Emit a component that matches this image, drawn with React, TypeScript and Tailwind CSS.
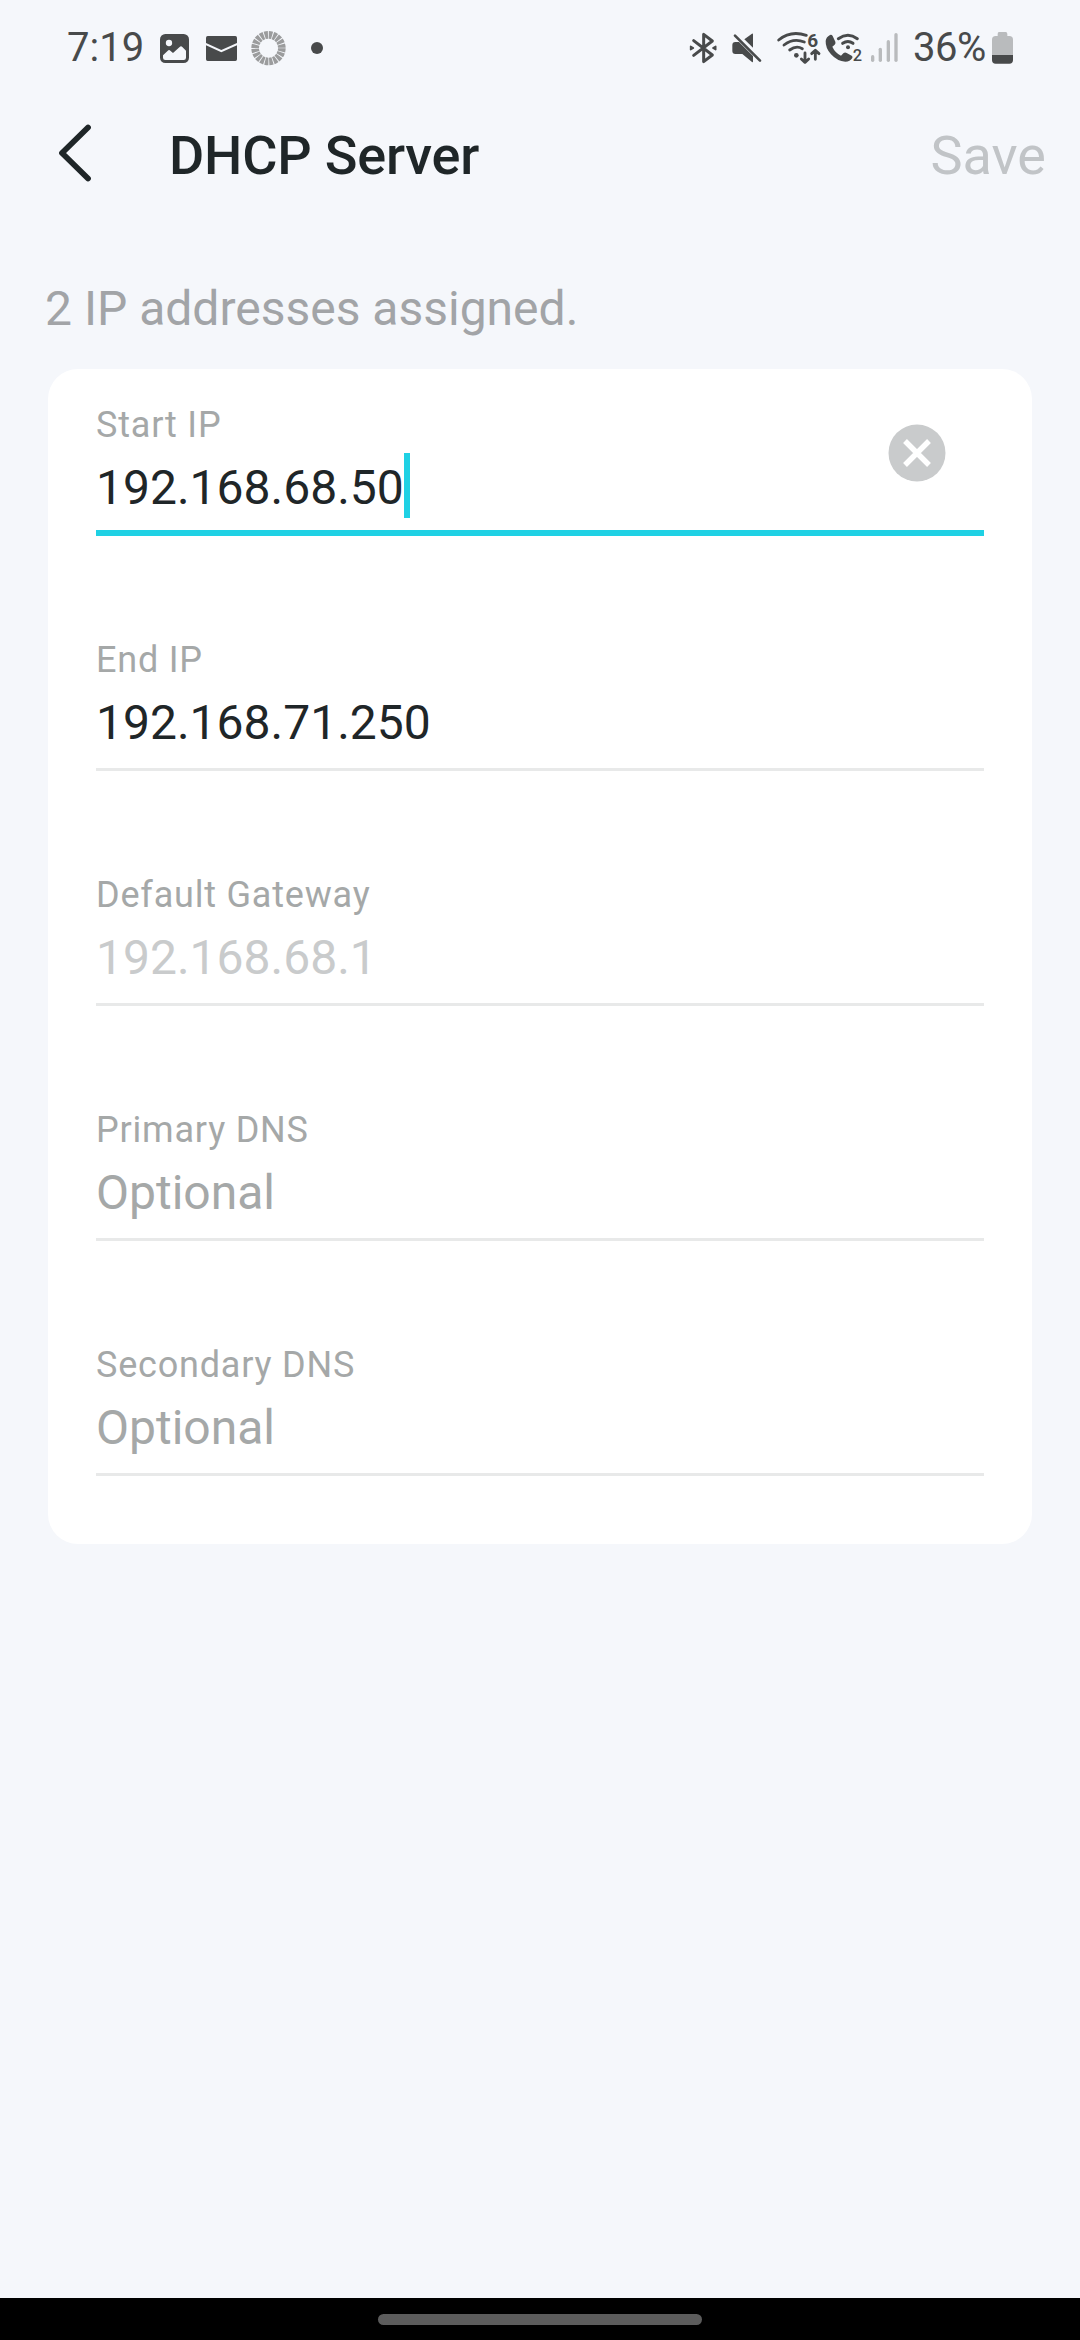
import React from "react";

type FieldProps = {
  label: string;
  value: string;
  valueClass: string;
  active?: boolean;
};

const INK = "#484a4b";

function ImageIcon() {
  return (
    <svg className="ml-[19px] h-10 w-[29px] shrink-0" viewBox="330 24 87 120">
      <rect x="330" y="42" width="87" height="87" rx="16" fill={INK} />
      <circle cx="357" cy="69" r="9.5" fill="#f5f7fb" />
      <path d="M339 106 L355 91 Q358 89 361 92 L369 99 L389 81 Q393 77 397 81 L408 92 V113 Q408 120 401 120 H346 Q339 120 339 113 Z" fill="#f5f7fb" />
    </svg>
  );
}

function MailIcon() {
  return (
    <svg className="ml-[17px] h-10 w-[31px] shrink-0" viewBox="468 24 93 120">
      <path d="M473 48 H556 Q561 48 561 53 V69 L514 90 L468 69 V53 Q468 48 473 48 Z" fill={INK} />
      <path d="M468 76 L514 97 L561 76 V118 Q561 123 556 123 H473 Q468 123 468 118 Z" fill={INK} />
    </svg>
  );
}

function RingIcon() {
  return (
    <svg className="ml-[14px] h-10 w-[35px] shrink-0" viewBox="603 24 105 120">
      <circle
        cx="655.5"
        cy="84.5"
        r="40"
        fill="none"
        stroke="#9b9c9d"
        strokeWidth="23"
        pathLength={200}
        strokeDasharray="8 2"
      />
    </svg>
  );
}

function BluetoothIcon() {
  return (
    <svg className="h-10 w-7 shrink-0" viewBox="57 24 84 120">
      <path
        d="M71 62 L127 105 L101 125 V43 L127 63 L71 106"
        fill="none"
        stroke={INK}
        strokeWidth="9"
        strokeLinejoin="round"
        strokeLinecap="round"
      />
      <path d="M62 79 L70 84 L62 89 Z M137 79 L129 84 L137 89 Z" fill={INK} stroke={INK} strokeWidth="5" strokeLinejoin="round" />
    </svg>
  );
}

function MuteIcon() {
  return (
    <svg className="ml-[15px] h-10 w-[30px] shrink-0" viewBox="186 24 90 120">
      <path d="M223 58 L246 41 Q249 39 249 43 V83 Z" fill={INK} />
      <path d="M196 66 H207 L249 108 V124 Q249 128 246 126 L217 102 H196 Q187 102 187 93 V75 Q187 66 196 66 Z" fill={INK} />
      <path d="M195 47 L270 122" stroke={INK} strokeWidth="8" strokeLinecap="round" />
    </svg>
  );
}

function WifiIcon() {
  return (
    <svg className="ml-[15px] h-10 w-11 shrink-0 overflow-visible" viewBox="321 24 132 120">
      <g fill="none" stroke={INK} strokeLinecap="round" strokeWidth="8.5">
        <path d="M326 60 Q362 30 409 46" />
        <path d="M342 75 Q370 53 403 66" />
        <path d="M359 90 Q379 75 397 86" />
      </g>
      <circle cx="379" cy="106" r="7" fill={INK} />
      <text x="412" y="80" fontSize="57" fontWeight="700" fill={INK}>6</text>
      <g fill="none" stroke={INK} strokeWidth="8.5" strokeLinecap="round" strokeLinejoin="round">
        <path d="M405 99 V126 M394 117 L405 127 L416 117" />
        <path d="M436 118 V92 M425 101 L436 91 L447 101" />
      </g>
    </svg>
  );
}

function WifiCallIcon() {
  return (
    <svg className="ml-1 h-10 w-[37px] shrink-0 overflow-visible" viewBox="465 24 111 120">
      <path
        d="M480 45 Q485 43 488 48 L496 65 Q498 70 494 74 L487 80 Q495 98 513 107 L520 100 Q525 96 530 99 L545 107 Q549 110 547 114 Q540 125 526 125 Q502 124 483 103 Q466 84 467 63 Q468 51 480 45 Z"
        fill={INK}
      />
      <g fill="none" stroke={INK} strokeLinecap="round" strokeWidth="9">
        <path d="M505 56 Q534 36 562 56" />
        <path d="M518 70 Q534 59 549 70" />
      </g>
      <circle cx="534" cy="82" r="6" fill={INK} />
      <text x="548" y="123" fontSize="49" fontWeight="500" fill={INK}>2</text>
    </svg>
  );
}

function SignalIcon() {
  return (
    <svg className="ml-2 h-10 w-[29px] shrink-0" viewBox="600 24 87 120">
      <g stroke="#b9bbbd" strokeWidth="10" strokeLinecap="round">
        <path d="M608 110 V121" />
        <path d="M631 88 V121" />
        <path d="M655 65 V121" />
        <path d="M678 44 V121" />
      </g>
    </svg>
  );
}

function BatteryIcon() {
  return (
    <svg className="h-10 w-[21px] shrink-0" viewBox="966 24 63 120">
      <path d="M987 36 H1007 Q1012 36 1012 42 V48 H1018 Q1029 48 1029 59 V105 H966 V59 Q966 48 977 48 H983 V42 Q983 36 987 36 Z" fill="#b9bbbd" />
      <path d="M966 105 H1029 V120 Q1029 131 1018 131 H977 Q966 131 966 120 Z" fill={INK} />
    </svg>
  );
}

function StatusBar() {
  return (
    <div className="flex h-24 items-center justify-between px-[67px] text-[#484a4b]">
      <div className="flex items-center">
        <span className="w-[74px] text-[40px] leading-10 whitespace-nowrap">7:19</span>
        <ImageIcon />
        <MailIcon />
        <RingIcon />
        <span className="ml-[25px] h-3 w-3 rounded-full bg-[#484a4b]" />
      </div>
      <div className="flex items-center">
        <BluetoothIcon />
        <MuteIcon />
        <WifiIcon />
        <WifiCallIcon />
        <SignalIcon />
        <span className="ml-[14px] w-[79px] text-[40px] leading-10 tracking-[-0.5px] whitespace-nowrap">36%</span>
        <BatteryIcon />
      </div>
    </div>
  );
}

function Header() {
  return (
    <header className="flex h-[119px] items-center pr-[34px] pl-[57px] text-[54px] leading-[64px]">
      <svg className="mb-[5px] h-[60px] w-9 shrink-0" viewBox="0 0 36 60" fill="none">
        <path d="M31 4.5 L5 30 L31 55.5" stroke="#1f2628" strokeWidth="5.8" strokeLinecap="round" strokeLinejoin="round" />
      </svg>
      <h1 className="ml-[76px] font-medium tracking-[-0.2px] text-[#1f2628]">DHCP Server</h1>
      <button className="ml-auto text-[#c1c4c7]">Save</button>
    </header>
  );
}

function ClearButton() {
  return (
    <button className="absolute top-[21px] right-[38px]" aria-label="Clear">
      <svg className="h-[58px] w-[58px]" viewBox="0 0 58 58">
        <circle cx="29" cy="29" r="28.5" fill="#c9cbcc" />
        <path d="M17 17 L41 41 M41 17 L17 41" stroke="#fff" strokeWidth="5.4" />
      </svg>
    </button>
  );
}

function Field({ label, value, valueClass, active }: FieldProps) {
  return (
    <div className="relative flex h-[133px] flex-col">
      <label className="text-[36px] leading-[44px] tracking-[0.8px] text-[#a5a8a8]">{label}</label>
      <div className="mt-[13px] flex h-14 items-center text-[48px] leading-[56px]">
        <span className={valueClass}>{value}</span>
        {active && <span className="-mt-[5px] h-[65px] w-1.5 bg-[#1fd1e4]" />}
      </div>
      <div className={active ? "mt-auto h-1.5 shrink-0 bg-[#1fd1e4]" : "mt-auto h-[3px] shrink-0 bg-[#e8e9e9]"} />
      {active && <ClearButton />}
    </div>
  );
}

const fields: FieldProps[] = [
  { label: "Start IP", value: "192.168.68.50", valueClass: "text-[#1f2628]", active: true },
  { label: "End IP", value: "192.168.71.250", valueClass: "text-[#1f2628]" },
  { label: "Default Gateway", value: "192.168.68.1", valueClass: "text-[#c9cbcc]" },
  { label: "Primary DNS", value: "Optional", valueClass: "text-[#a5a8a8]" },
  { label: "Secondary DNS", value: "Optional", valueClass: "text-[#a5a8a8]" },
];

export default function App() {
  return (
    <div className="flex h-[2340px] w-[1080px] flex-col overflow-hidden bg-[#f5f7fb] font-['Roboto',sans-serif]">
      <StatusBar />
      <Header />
      <main className="px-12 pt-[66px]">
        <p className="-ml-[3px] text-[48px] leading-[56px] text-[#a2a4a7]">2 IP addresses assigned.</p>
        <section className="mt-8 flex flex-col gap-[102px] rounded-[30px] bg-white px-12 pt-[34px] pb-[68px]">
          {fields.map((f) => (
            <Field key={f.label} {...f} />
          ))}
        </section>
      </main>
      <footer className="mt-auto flex h-[42px] justify-center bg-black pt-4">
        <div className="h-[11px] w-[324px] rounded-full bg-[#5c5c5c]" />
      </footer>
    </div>
  );
}
